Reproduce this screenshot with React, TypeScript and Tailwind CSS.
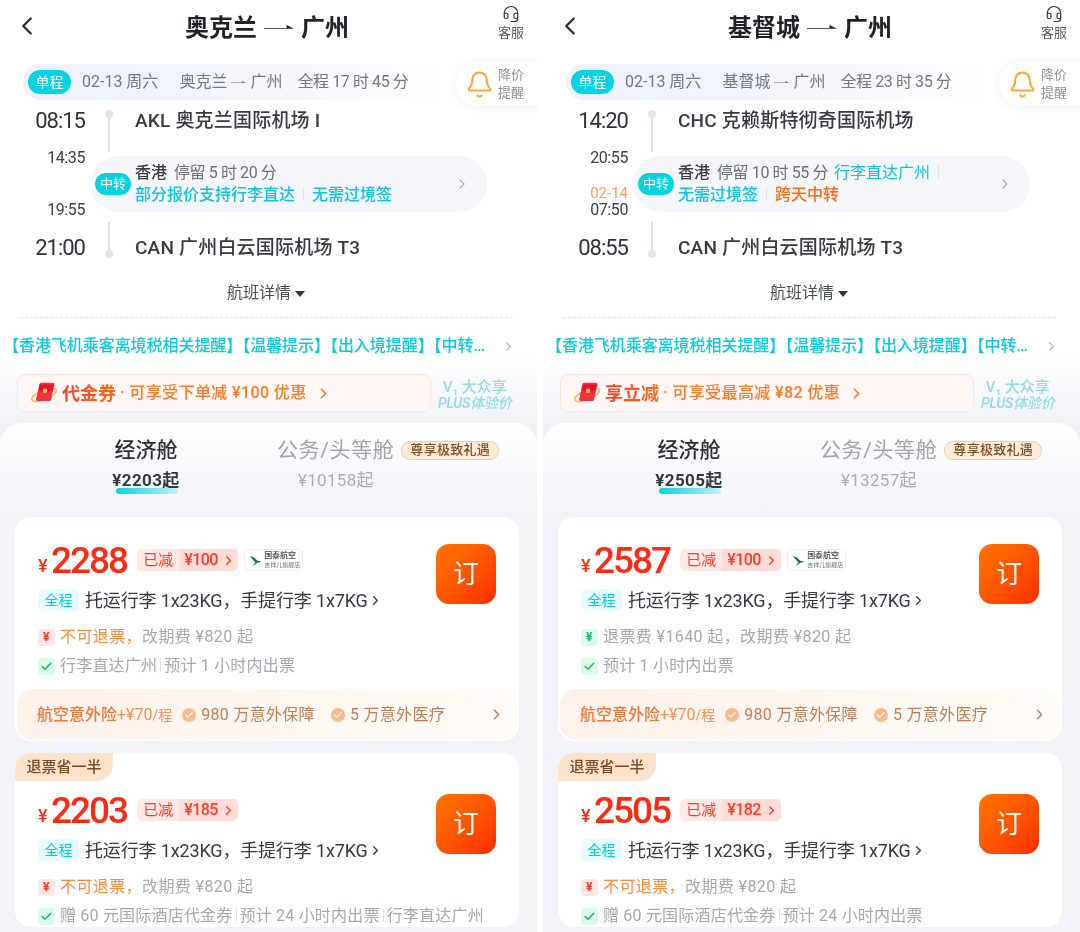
import React from 'react';
import { Bell, Check, ChevronLeft, ChevronRight, Headset } from 'lucide-react';

type Fare = {
  price: string;
  off: string;
  logo?: boolean;
  ribbon?: string;
  refundOk?: boolean;
  refund: string;
  change: string;
  notes: string[];
  insurance?: boolean;
};

type Trip = {
  city: string;
  duration: string;
  depart: string;
  from: string;
  arrive1: string;
  leaveDate?: string;
  leave2: string;
  stop: string;
  arrive: string;
  wrapTags?: boolean;
  promoTitle: string;
  promoText: string;
  eco: string;
  biz: string;
  fares: Fare[];
};

const trips: Trip[] = [
  {
    city: '奥克兰',
    duration: '全程 17 时 45 分',
    depart: '08:15',
    from: 'AKL 奥克兰国际机场 I',
    arrive1: '14:35',
    leave2: '19:55',
    stop: '停留 5 时 20 分',
    arrive: '21:00',
    promoTitle: '代金券',
    promoText: '可享受下单减 ¥100 优惠',
    eco: '¥2203',
    biz: '¥10158',
    fares: [
      { price: '2288', off: '¥100', logo: true, refund: '不可退票，', change: '改期费 ¥820 起', notes: ['行李直达广州', '预计 1 小时内出票'], insurance: true },
      { price: '2203', off: '¥185', ribbon: '退票省一半', refund: '不可退票，', change: '改期费 ¥820 起', notes: ['赠 60 元国际酒店代金券', '预计 24 小时内出票', '行李直达广州'] },
    ],
  },
  {
    city: '基督城',
    duration: '全程 23 时 35 分',
    depart: '14:20',
    from: 'CHC 克赖斯特彻奇国际机场',
    arrive1: '20:55',
    leaveDate: '02-14',
    leave2: '07:50',
    stop: '停留 10 时 55 分',
    arrive: '08:55',
    wrapTags: true,
    promoTitle: '享立减',
    promoText: '可享受最高减 ¥82 优惠',
    eco: '¥2505',
    biz: '¥13257',
    fares: [
      { price: '2587', off: '¥100', logo: true, refundOk: true, refund: '', change: '退票费 ¥1640 起，改期费 ¥820 起', notes: ['预计 1 小时内出票'], insurance: true },
      { price: '2505', off: '¥182', ribbon: '退票省一半', refund: '不可退票，', change: '改期费 ¥820 起', notes: ['赠 60 元国际酒店代金券', '预计 24 小时内出票'] },
    ],
  },
];

const Arrow = ({ className }: { className: string }) => (
  <svg viewBox="0 0 24 8" preserveAspectRatio="none" className={className} fill="currentColor">
    <path d="M0 4h18V1l6 3.800H0z" />
  </svg>
);

const Sep = () => <span className="mx-[8px] inline-block h-[14px] w-px bg-[#dfe3e8] align-[-1px]" />;

const PromoIcon = () => (
  <svg viewBox="0 0 32 26" className="h-[26px] w-[30px]">
    <ellipse cx="15" cy="15" rx="14" ry="5" fill="none" stroke="#f8b64a" strokeWidth="1.6" transform="rotate(-22 15 15)" />
    <path d="M12 2h12a2 2 0 0 1 2 2.400L22.400 20a2 2 0 0 1-2 1.600H8.600a2 2 0 0 1-2-2.400L10 3.600A2 2 0 0 1 12 2z" fill="#f5303f" />
    <path d="M10.600 4h14.600l-1.400 6c-5 2.400-9 2.400-14.600 0z" fill="#e0142a" />
    <circle cx="16" cy="10.500" r="2.400" fill="#ffc24d" />
  </svg>
);

const CathayLogo = () => (
  <div className="ml-[6px] flex h-[22px] w-[59px] items-center gap-[3px] rounded-[4px] border border-[#eceef0] pl-[5px]">
    <svg viewBox="0 0 12 12" className="h-[11px] w-[11px]">
      <path d="M0 1c3 .6 6 2.600 8 5.400L12 7c-1.400 1-2.800 1.500-4 1.500L3 12c1-1.600 2-3 3-4.200C4 6 1.500 3.500 0 1z" fill="#116a6e" />
    </svg>
    <div className="flex flex-col items-start leading-none">
      <span className="text-[8px] font-medium leading-[10px] text-[#3c4348]">国泰航空</span>
      <span className="text-[6px] leading-[8px] text-[#6d7378]">吉祥儿旗舰店</span>
    </div>
  </div>
);

const FareCard = ({ fare }: { fare: Fare }) => (
  <div className={`relative mx-[15px] mb-[12px] w-[504px] shrink-0 rounded-[16px] bg-white ${fare.ribbon ? 'pt-[35px]' : 'pt-[21px]'}`}>
    {fare.ribbon && (
      <div className="absolute left-0 top-0 flex h-[28px] w-[98px] items-center justify-center rounded-tl-[16px] rounded-br-[16px] bg-[#fde2cc] text-[15px] font-medium text-[#7b4a26]">
        {fare.ribbon}
      </div>
    )}
    <div className="flex items-start justify-between px-[23px]">
      <div>
        <div className="flex h-[44px] items-center">
          <span className="mt-[10px] w-[13px] text-[18px] font-medium text-[#ff2a12]">¥</span>
          <span className="text-[37px] font-medium leading-none tracking-[-2px] text-[#ff2a12]">{fare.price}</span>
          <div className="ml-[10px] flex h-[22px] w-[101px] items-center overflow-hidden rounded-[5px] bg-[#ffe9e6] text-[15px] text-[#ff3b24]">
            <span className="px-[6px]">已减</span>
            <span className="flex h-full flex-1 items-center gap-[3px] bg-[#ffdcd7] pl-[5px] text-[16px] font-medium tracking-[-0.5px]">
              {fare.off}
              <ChevronRight size={15} strokeWidth={2} />
            </span>
          </div>
          {fare.logo && <CathayLogo />}
        </div>
        <div className="mt-[7px] flex h-[22px] items-center">
          <span className="flex h-[22px] w-[41px] items-center justify-center rounded-[5px] bg-[#e6fbfd] text-[14px] text-[#00cfdf]">全程</span>
          <span className="ml-[6px] whitespace-nowrap text-[18px] tracking-[-0.15px] text-[#333a40]">托运行李 1x23KG，手提行李 1x7KG</span>
          <ChevronRight size={15} strokeWidth={2} className="text-[#333a40]" />
        </div>
      </div>
      <button className="mt-[6px] flex h-[60px] w-[60px] items-center justify-center rounded-[13px] bg-gradient-to-br from-[#ff7400] to-[#ff2800] text-[26px] text-white">
        订
      </button>
    </div>
    <div className="mt-[15px] flex h-[22px] items-center pl-[23px] text-[16px] tracking-[0.4px]">
      <span className={`flex h-[17px] w-[17px] items-center justify-center rounded-[4px] text-[12px] font-bold ${fare.refundOk ? 'bg-[#dcfaea] text-[#0fbf6b]' : 'bg-[#ffe6e2] text-[#ff3b24]'}`}>¥</span>
      <span className="ml-[5px] text-[#ff8a3c]">{fare.refund}</span>
      <span className="text-[#a3a9ae]">{fare.change}</span>
    </div>
    <div className="mt-[7px] flex h-[22px] items-center pl-[23px] text-[16px] tracking-[0.2px] text-[#a3a9ae]">
      <span className="flex h-[17px] w-[17px] items-center justify-center rounded-[4px] bg-[#dcfaea] text-[#0fbf6b]">
        <Check size={13} strokeWidth={3} />
      </span>
      <span className="ml-[5px] whitespace-nowrap">
        {fare.notes.map((n, i) => (
          <React.Fragment key={n}>
            {i > 0 && <span className="mx-[3px] inline-block h-[14px] w-px bg-[#e2e5e8] align-[-1px]" />}
            {n}
          </React.Fragment>
        ))}
      </span>
    </div>
    {fare.insurance && (
      <div className="mx-[2px] mb-px mt-[12px] flex h-[51px] items-center rounded-[16px] bg-gradient-to-r from-[#fff1e9] to-[#fffbf8] pl-[20px] pr-[12px] text-[16px] tracking-[0.3px] text-[#bb7f58]">
        <span className="font-medium tracking-normal text-[#e9793d]">航空意外险</span>
        <span className="tracking-normal text-[#f0935c]">+¥70<span className="text-[14px]">/程</span></span>
        <span className="ml-[10px] flex h-[14px] w-[14px] items-center justify-center rounded-full bg-[#fcba8c] text-white"><Check size={10} strokeWidth={3} /></span>
        <span className="ml-[5px]">980 万意外保障</span>
        <span className="ml-[16px] flex h-[14px] w-[14px] items-center justify-center rounded-full bg-[#fcba8c] text-white"><Check size={10} strokeWidth={3} /></span>
        <span className="ml-[5px]">5 万意外医疗</span>
        <ChevronRight size={17} strokeWidth={2} className="ml-auto" />
      </div>
    )}
  </div>
);

const Panel = ({ trip }: { trip: Trip }) => (
  <div className="flex h-[932px] w-[537px] shrink-0 flex-col overflow-hidden bg-gradient-to-b from-white from-[38%] to-[#eff1f6] to-[46%]">
    {/* top bar */}
    <div className="relative flex h-[56px] shrink-0 items-center justify-center pr-[3px]">
      <ChevronLeft size={30} strokeWidth={1.8} className="absolute left-[12px] top-[11px] text-[#26292d]" />
      <div className="flex items-center text-[24px] font-bold text-[#1f2226]">
        {trip.city}
        <Arrow className="mx-[7px] h-[8px] w-[30px]" />
        广州
      </div>
      <div className="absolute left-[497px] top-[5px] flex w-[28px] flex-col items-center text-[13px] leading-[17px] text-[#555b60]">
        <Headset size={18} strokeWidth={1.6} className="text-[#33373b]" />
        <span className="mt-[1px] whitespace-nowrap">客服</span>
      </div>
    </div>

    {/* route summary */}
    <div className="relative mt-[8px] h-[36px] shrink-0">
      <div className="ml-[23px] flex h-[36px] w-[430px] items-center rounded-l-[18px] bg-gradient-to-r from-[#eef1fa] via-[#f3f5fb] to-white pl-[5px] text-[16px] text-[#72787e]">
        <span className="flex h-[24px] w-[43px] items-center justify-center rounded-full bg-[#06d3e0] text-[14px] text-white">单程</span>
        <span className="ml-[11px]">02-13 周六</span>
        <span className="ml-[21px] flex items-center">
          {trip.city}
          <Arrow className="mx-[4px] h-[5px] w-[15px]" />
          广州
        </span>
        <span className="ml-[15px] tracking-[-0.4px]">{trip.duration}</span>
      </div>
      <div className="absolute left-[456px] top-[-2px] flex h-[44px] w-[90px] items-center rounded-l-[22px] bg-white pl-[9px] shadow-[0_1px_8px_rgba(120,130,150,0.14)]">
        <Bell size={29} strokeWidth={1.7} className="text-[#ffa733]" />
        <span className="ml-[4px] w-[28px] text-[13px] leading-[18px] text-[#8b9196]">降价 提醒</span>
      </div>
    </div>

    {/* timeline */}
    <div className="mt-[6px] shrink-0">
      <div className="flex h-[42px] items-start">
        <span className="w-[85px] text-right text-[22px] leading-[30px] tracking-[-1px] text-[#2e3338]">{trip.depart}</span>
        <div className="ml-[20px] mt-[4px] flex w-[8px] flex-col items-center">
          <span className="h-[8px] w-[8px] rounded-full bg-[#dfe5e7]" />
          <span className="h-[34px] w-[2px] bg-[#dfe5e7]" />
        </div>
        <span className="ml-[22px] text-[19px] font-medium leading-[30px] tracking-[0.2px] text-[#363b40]">{trip.from}</span>
      </div>
      <div className="relative flex h-[68px]">
        <div className="flex w-[85px] flex-col items-end text-[16px] leading-[18px] tracking-[-0.4px] text-[#3b4045]">
          <span className="mt-[1px]">{trip.arrive1}</span>
          {trip.leaveDate && <span className="mt-[18px] text-[15px] leading-[16px] tracking-normal text-[#ff9a5c]">{trip.leaveDate}</span>}
          <span className={trip.leaveDate ? '' : 'mt-[34px]'}>{trip.leave2}</span>
        </div>
        <div className="ml-[5px] mt-[8px] flex h-[56px] w-[397px] items-center rounded-[28px] bg-[#f4f6fb] pl-[5px]">
          <span className="flex h-[22px] w-[36px] items-center justify-center rounded-full bg-[#06d3e0] text-[13px] text-white">中转</span>
          <div className="ml-[4px] flex-1 text-[16px] leading-[22px]">
            <div className="whitespace-nowrap">
              <span className="font-medium text-[#3a3f44]">香港</span>
              <span className="ml-[7px] tracking-[-0.4px] text-[#6b7176]">{trip.stop}</span>
              {trip.wrapTags && <span className="ml-[6px] text-[#0cc5dc]">行李直达广州</span>}
              {trip.wrapTags && <Sep />}
            </div>
            <div className="whitespace-nowrap font-medium text-[#0cc5dc]">
              {trip.wrapTags ? (
                <>
                  无需过境签
                  <Sep />
                  <span className="text-[#ff6a14]">跨天中转</span>
                </>
              ) : (
                <>
                  部分报价支持行李直达
                  <Sep />
                  无需过境签
                </>
              )}
            </div>
          </div>
          <ChevronRight size={16} strokeWidth={1.7} className="mr-[17px] text-[#a2a7ac]" />
        </div>
      </div>
      <div className="flex h-[44px] items-end">
        <span className="w-[85px] text-right text-[22px] leading-[24px] tracking-[-1px] text-[#2e3338]">{trip.arrive}</span>
        <div className="ml-[20px] flex w-[8px] flex-col items-center pb-[2px]">
          <span className="h-[28px] w-[2px] bg-[#dfe5e7]" />
          <span className="h-[8px] w-[8px] rounded-full bg-[#dfe5e7]" />
        </div>
        <span className="ml-[22px] text-[19px] font-medium leading-[24px] tracking-[0.2px] text-[#363b40]">CAN 广州白云国际机场 T3</span>
      </div>
    </div>

    {/* flight details */}
    <div className="mt-[22px] flex h-[22px] shrink-0 items-center justify-center pr-[5px] text-[16px] text-[#4b5055]">
      航班详情
      <span className="ml-[4px] mt-[2px] h-0 w-0 border-x-[5px] border-t-[6px] border-x-transparent border-t-[#33373b]" />
    </div>
    <div className="mx-[20px] mt-[13px] w-[493px] shrink-0 border-t border-dashed border-[#e3e6e9]" />

    {/* notices */}
    <div className="mt-[17px] flex h-[22px] shrink-0 items-center pl-[3px] text-[16px] font-medium tracking-[-0.05px] text-[#0cc9dc]">
      <span className="whitespace-nowrap">【香港飞机乘客离境税相关提醒】【温馨提示】【出入境提醒】【中转…</span>
      <ChevronRight size={15} strokeWidth={2} className="ml-[16px] text-[#b4b8bc]" />
    </div>

    {/* promo */}
    <div className="mt-[17px] flex h-[38px] shrink-0 items-center">
      <div className="ml-[17px] flex h-[38px] w-[414px] items-center rounded-[8px] border border-[#fde4df] bg-[#fff7f5] pl-[12px]">
        <PromoIcon />
        <span className="ml-[2px] bg-gradient-to-r from-[#ff3a24] to-[#ff6a14] bg-clip-text text-[18px] font-bold text-transparent">{trip.promoTitle}</span>
        <span className="ml-[4px] text-[16px] font-medium tracking-[0.4px] text-[#ff7a26]">· {trip.promoText}</span>
        <ChevronRight size={17} strokeWidth={2.4} className="ml-[8px] text-[#ff7a26]" />
      </div>
      <div className="ml-[7px] mt-[3px] flex flex-col items-center whitespace-nowrap text-[14px] font-medium leading-[16px] text-[#93d9ec]">
        <span className="text-[15px]">V₁ 大众享</span>
        <span className="italic tracking-[-0.2px]">PLUS体验价</span>
      </div>
    </div>

    {/* sheet with cabin tabs and fares */}
    <div className="mt-[11px] flex min-h-0 flex-1 flex-col rounded-t-[22px] bg-gradient-to-b from-white to-[#f1f3f8] to-[90px]">
      <div className="flex h-[94px] shrink-0">
        <div className="ml-[110px] mr-[95px] flex w-[72px] flex-col items-center whitespace-nowrap pt-[13px]">
          <span className="text-[21px] font-medium leading-[28px] text-[#2b2f33]">经济舱</span>
          <span className="relative mt-[5px] text-[17px] font-bold leading-[22px] tracking-[0.4px] text-[#33383c]">
            {trip.eco}起
            <span className="absolute bottom-[-3px] left-[4px] h-[6px] w-[62px] rounded-[3px] bg-gradient-to-r from-[#06d3e0] to-[#06d3e0]/20" />
          </span>
        </div>
        <div className="flex flex-col pt-[13px]">
          <div className="flex items-center">
            <span className="whitespace-nowrap text-[21px] leading-[28px] tracking-[0.6px] text-[#9fa4a9]">公务/头等舱</span>
            <span className="ml-[7px] flex h-[19px] w-[98px] items-center justify-center whitespace-nowrap rounded-[9px] border border-[#eccfa9] bg-[#fbebd9] text-[13px] font-medium tracking-[0.3px] text-[#7c4e24]">尊享极致礼遇</span>
          </div>
          <span className="ml-[21px] mt-[5px] text-[17px] leading-[22px] tracking-[0.3px] text-[#a8adb1]">{trip.biz}起</span>
        </div>
      </div>
      {trip.fares.map((f) => (
        <FareCard key={f.price} fare={f} />
      ))}
    </div>
  </div>
);

export default function App() {
  return (
    <div className="flex h-[932px] w-[1080px] gap-[6px] overflow-hidden bg-white font-['Roboto','Noto_Sans_CJK_SC',sans-serif] blur-[0.4px]">
      {trips.map((t) => (
        <Panel key={t.city} trip={t} />
      ))}
    </div>
  );
}
